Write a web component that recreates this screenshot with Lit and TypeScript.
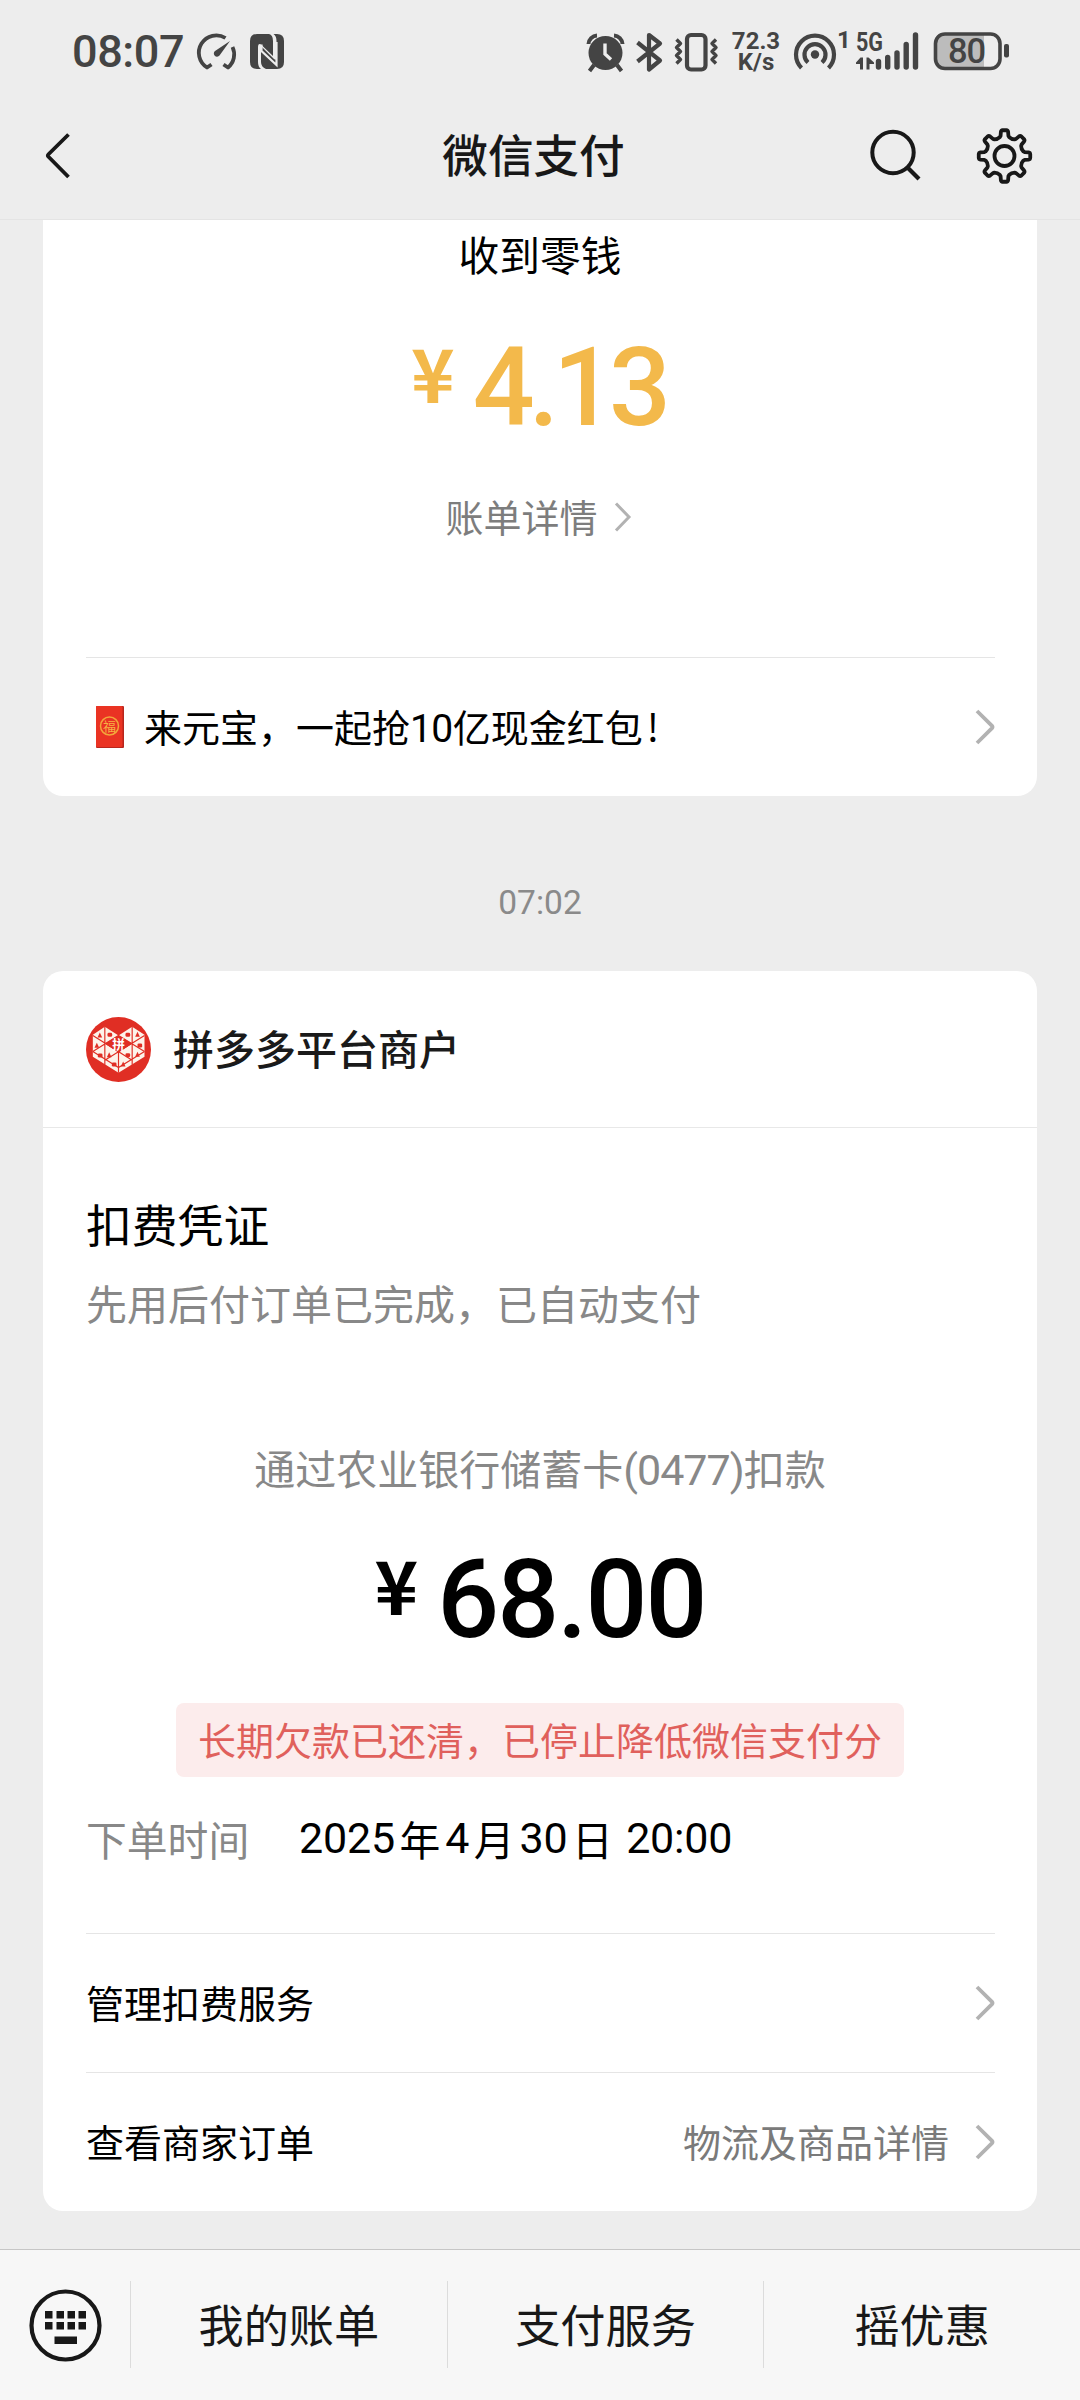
import { LitElement, html, svg, css, type SVGTemplateResult } from "lit";
import { customElement, property } from "lit/decorators.js";

const INK = "#444";

/** Eight-toothed gear outline centred on (cx, cy). */
function gearPath(cx: number, cy: number): string {
  const pt = (r: number, deg: number) => {
    const a = ((deg - 90) * Math.PI) / 180;
    return `${(cx + r * Math.cos(a)).toFixed(2)} ${(cy + r * Math.sin(a)).toFixed(2)}`;
  };
  let d = "";
  for (let i = 0; i < 8; i++) {
    const c = i * 45;
    d += `${i ? "L" : "M"}${pt(19.4, c - 14)}L${pt(20.6, c - 11)}L${pt(24.4, c - 8.5)}Q${pt(25.8, c - 7.5)} ${pt(25.8, c - 4)}`;
    d += `L${pt(25.8, c + 4)}Q${pt(25.8, c + 7.5)} ${pt(24.4, c + 8.5)}L${pt(20.6, c + 11)}L${pt(19.4, c + 14)}Q${pt(18, c + 22.5)} ${pt(19.4, c + 31)}`;
  }
  return d + "Z";
}

function glyph(x: number, y: number, w: number, h: number, body: SVGTemplateResult) {
  return html`<svg width=${w} height=${h} viewBox="${x} ${y} ${w} ${h}">${body}</svg>`;
}

@customElement("chevron-icon")
class ChevronIcon extends LitElement {
  @property({ type: Boolean }) small = false;
  static styles = css`
    :host { display: block; flex: none; }
    svg { display: block; }
  `;
  render() {
    return this.small
      ? html`<svg width="18" height="32" viewBox="0 0 18 32"><path d="M2 2.5 15 16 2 29.5" fill="none" stroke="#b2b2b2" stroke-width="3"/></svg>`
      : html`<svg width="20" height="36" viewBox="0 0 20 36"><path d="M2 2 17 16.8Q18 18 17 19.2L2 34" fill="none" stroke="#b2b2b2" stroke-width="3.8"/></svg>`;
  }
}

@customElement("status-bar")
class StatusBar extends LitElement {
  static styles = css`
    :host { display: flex; justify-content: space-between; height: 92px; box-sizing: border-box; padding: 30px 68px 0 72px; }
    .group { display: flex; height: 44px; }
    .time { width: 122px; font: 500 45px/44px Roboto, sans-serif; color: #444; letter-spacing: -0.4px; }
    .speed { display: flex; flex-direction: column; width: 64px; padding-top: 1px; box-sizing: border-box; text-align: center; font: 700 24px/20.5px Roboto, sans-serif; color: #444; }
    svg { display: block; overflow: visible; }
    text { font-family: Roboto, "Liberation Sans", sans-serif; font-weight: 700; }
  `;
  render() {
    return html`
      <div class="group">
        <div class="time">08:07</div>
        ${glyph(194, 30, 50, 44, svg`
          <g fill="none" stroke="${INK}" stroke-width="3.8">
            <path d="M225.5 38A17 17 0 0 0 207 67.5L211.5 64.5M232.5 47A17 17 0 0 1 228 67.5L223.5 64.5" stroke-linejoin="round"/>
          </g>
          <path d="M230 41 219.5 55.5A3.2 3.2 0 1 1 215 51Z" fill="${INK}"/>`)}
        ${glyph(244, 30, 46, 44, svg`
          <path d="M257 34H269Q273 35 273 41V56L262 45.500Q258 42 258 47V62Q258 67 261 69H257Q250 69 250 62V41Q250 34 257 34Z" fill="${INK}"/>
          <path d="M273.500 34H277Q284 34 284 41V62Q284 69 277 69H266Q261 67 261 62V46L274 59Q276.500 61 276.500 57V41Q276.500 36 273.500 34Z" fill="${INK}"/>
          <path d="M261.500 44.500V51L276.500 65V42" fill="none" stroke="#ededed" stroke-width="2.200"/>`)}
      </div>
      <div class="group">
        ${glyph(584, 30, 46, 44, svg`
          <circle cx="605.500" cy="53" r="17" fill="${INK}"/>
          <path d="M588.500 44A9 9 0 0 1 597 35.500M622.500 44A9 9 0 0 0 614 35.500" stroke="${INK}" stroke-width="4" fill="none"/>
          <path d="M594 65 589.500 71M617 65 621.500 71" stroke="${INK}" stroke-width="4"/>
          <path d="M605 43.500V54L611 59.500" stroke="#ededed" stroke-width="3.400" fill="none"/>`)}
        ${glyph(630, 30, 38, 44, svg`
          <path d="M637.500 42.500 660 60.500 649 69.500V35L660 43.500 637.500 61.500" fill="none" stroke="${INK}" stroke-width="4.200" stroke-linejoin="round"/>`)}
        ${glyph(668, 30, 56, 44, svg`
          <rect x="687" y="35" width="18.500" height="34.500" rx="4" fill="none" stroke="${INK}" stroke-width="4.200"/>
          <path d="M676.500 39.500 680.500 43.500 676.500 47.500 680.500 51.500 676.500 55.500 680.500 59.500 676.500 63.500M716 39.500 712 43.500 716 47.500 712 51.500 716 55.500 712 59.500 716 63.500" fill="none" stroke="${INK}" stroke-width="3.400" stroke-linejoin="round"/>`)}
        <div class="speed"><span>72.3</span><span>K/s</span></div>
        ${glyph(788, 30, 64, 44, svg`
          <g fill="none" stroke="${INK}" stroke-width="4.200">
            <path d="M801.500 68A19 19 0 1 1 828.500 68"/>
            <path d="M808 62.500A10.500 10.500 0 1 1 822 62.500"/>
          </g>
          <circle cx="815" cy="54.500" r="4.200" fill="${INK}"/>
          <text x="837" y="48" font-size="24" fill="${INK}">1</text>`)}
        ${glyph(852, 30, 76, 44, svg`
          <text x="856" y="50.500" font-size="25" textLength="27" lengthAdjust="spacingAndGlyphs" fill="${INK}">5G</text>
          <path d="M856 64V62.500L860.500 57.500H863V69.500H860V64ZM866.500 57.500H868.500L874 62.500V64H869.500V69.500H866.500Z" fill="${INK}"/>
          <g stroke="${INK}" stroke-width="5.400" stroke-linecap="round">
            <path d="M878.500 61.500V67M887.700 57.500V67M897 53V67M906.200 44.500V67M915.500 35V67"/>
          </g>`)}
        ${glyph(928, 30, 84, 44, svg`
          <path d="M944 33H984V70H944Q935 70 935 61V42Q935 33 944 33Z" fill="#bcbcbc"/>
          <rect x="935.500" y="34" width="64.500" height="34.500" rx="9.500" fill="none" stroke="${INK}" stroke-width="3.600"/>
          <rect x="1004" y="44" width="5" height="13.500" rx="2" fill="${INK}"/>
          <text x="948" y="63" font-size="34.500" textLength="38" style="font-weight:500" fill="${INK}">80</text>`)}
      </div>`;
  }
}

@customElement("nav-bar")
class NavBar extends LitElement {
  static styles = css`
    :host { display: grid; grid-template-columns: 1fr auto 1fr; align-items: center; height: 128px; box-sizing: border-box; border-bottom: 1px solid #e4e4e4; }
    .title { font-size: 45.6px; font-weight: 500; line-height: 60px; color: #181818; padding: 0 13px 6px 0; }
    .back { padding-left: 44px; }
    .actions { display: flex; align-items: center; justify-content: flex-end; gap: 51px; padding-right: 46px; }
    svg { display: block; }
  `;
  render() {
    return html`
      <div class="back">${glyph(44, 129, 28, 54, svg`
        <path d="M68.500 134.500 48.500 154.200Q47.300 155.500 48.500 156.800L68.500 177" fill="none" stroke="#181818" stroke-width="3.800"/>`)}</div>
      <div class="title">微信支付</div>
      <div class="actions">
        ${glyph(869, 127, 54, 57, svg`
          <circle cx="893" cy="152.500" r="20.700" fill="none" stroke="#181818" stroke-width="4"/>
          <path d="M907.500 167.500 919 179" stroke="#181818" stroke-width="4.200"/>`)}
        ${glyph(974, 125.5, 60, 60, svg`
          <path d="${gearPath(1004.5, 155.5)}" fill="none" stroke="#181818" stroke-width="3.800" stroke-linejoin="round"/>
          <circle cx="1004.500" cy="155.500" r="10" fill="none" stroke="#181818" stroke-width="3.800"/>`)}
      </div>`;
  }
}

const cardStyles = css`
  :host { display: block; background: #fff; margin: 0 43px; }
  svg { display: block; flex: none; }
  .amount { display: flex; justify-content: center; height: 120px; font-family: Roboto, "Noto Sans CJK SC", sans-serif; font-weight: 500; font-size: 109px; line-height: 120px; }
  .yen { font-family: "Noto Sans CJK SC", sans-serif; font-size: 74px; font-weight: 700; line-height: 86px; }
  .row { display: flex; align-items: center; height: 138px; margin: 0 42px 0 43px; border-top: 1px solid #e5e5e5; font-size: 38px; }
  .label { flex: 1; color: #000; padding-bottom: 4px; }
  .note { color: #7a7a7a; padding-bottom: 4px; margin-right: 26px; }
`;

@customElement("income-card")
class IncomeCard extends LitElement {
  static styles = [cardStyles, css`
    :host { height: 576px; border-radius: 0 0 20px 20px; }
    .title { padding-top: 4px; text-align: center; font-size: 40.7px; line-height: 60px; color: #000; }
    .amount { margin: 44px 4px 0 0; color: #f3b94b; letter-spacing: -6px; }
    .yen { margin-right: 24px; }
    .link { display: flex; justify-content: center; align-items: center; gap: 16px; margin: 43px 3px 115px 0; height: 51px; font-size: 38px; color: #7d7d7d; }
    .link span { line-height: 50px; padding-bottom: 2px; }
    .packet { margin: 0 20px 0 10px; }
    .num { font-family: Roboto, sans-serif; font-size: 39px; letter-spacing: -0.6px; line-height: 0; }
    .bang { margin-left: 4px; }
  `];
  render() {
    return html`
      <div class="title">收到零钱</div>
      <div class="amount"><span class="yen">¥</span><span>4.13</span></div>
      <div class="link"><span>账单详情</span><chevron-icon small></chevron-icon></div>
      <div class="row">
        <svg class="packet" width="28" height="42" viewBox="0 0 28 42">
          <rect width="28" height="42" rx="1" fill="#b8261d"/>
          <rect width="26.500" height="41" rx="1" fill="#ea3323"/>
          <circle cx="13.500" cy="20" r="9" fill="none" stroke="#f3a63a" stroke-width="1.500"/>
          <text x="13.500" y="25" font-size="13" text-anchor="middle" fill="#f6b243">福</text>
        </svg>
        <span class="label">来元宝，一起抢<span class="num">10</span>亿现金红包<span class="bang">!</span></span>
        <chevron-icon></chevron-icon>
      </div>`;
  }
}

const heartIcons = [
  [71, 88], [101, 86], [62, 119], [72, 148], [99, 147], [114, 175],
  [141, 175], [155, 147], [184, 146], [191, 118], [184, 86], [155, 86],
];

@customElement("payment-card")
class PaymentCard extends LitElement {
  static styles = [cardStyles, css`
    :host { height: 1240px; border-radius: 20px; }
    .head { display: flex; align-items: center; gap: 22px; height: 156px; padding-left: 43px; border-bottom: 1px solid #e8e8e8; font-size: 41px; font-weight: 500; color: #1a1a1a; }
    .head span { padding-bottom: 4px; }
    .title { padding: 65px 43px 0; font-size: 45.8px; line-height: 60px; color: #000; }
    .desc { padding: 19px 43px 0; font-size: 41px; line-height: 60px; color: #888; }
    .via { padding-top: 105px; height: 60px; text-align: center; font-size: 41px; line-height: 60px; color: #888; }
    .num { font-family: Roboto, sans-serif; font-size: 43px; line-height: 0; letter-spacing: -0.2px; }
    .via .num { letter-spacing: -1px; }
    .amount { margin-top: 43px; color: #000; letter-spacing: -2px; }
    .yen { margin-right: 21px; }
    .tag { width: fit-content; margin: 43px auto 0; padding: 9px 22px 0; height: 65px; border-radius: 8px; background: #fcecec; color: #e0605c; font-size: 38px; line-height: 54px; }
    .order { display: flex; padding: 32px 43px 63px; height: 61px; font-size: 40.8px; line-height: 60px; color: #000; white-space: pre; }
    .order .num { line-height: 59px; }
    .key { color: #888; width: 213px; }
    .cj { margin: 0 5px 0 4.5px; }
    .clock { margin-left: -2px; }
  `];
  render() {
    return html`
      <div class="head">
        <svg width="65" height="65" viewBox="29.500 32.500 195 195">
          <circle cx="127" cy="130" r="97.500" fill="#e02e24"/>
          <path d="M86 62 127 88 168 62 205 86V152L127 200 50 152V86Z" fill="#fdf3ea"/>
          <path d="M127 88 168 112 127 138 86 112Z" fill="#e02e24"/>
          <path d="M86 62V176M168 62V176M127 138V200M50 88 168 162M50 136 127 184 205 136M50 136 127 88 205 136M205 88 86 162" fill="none" stroke="#e02e24" stroke-width="3.500"/>
          ${heartIcons.map(([x, y], i) => i % 2
            ? svg`<rect x=${x - 7} y=${y - 6} width="14" height="12" rx="4" fill="#e02e24"/>`
            : svg`<path d="M${x - 7} ${y + 6}L${x} ${y - 9}L${x + 7} ${y + 6}Z" fill="#e02e24"/>`)}
          <path d="M127 92 164 114 127 138 90 114Z" fill="#e02e24"/>
          <text x="127" y="128" font-size="38" font-weight="700" text-anchor="middle" fill="#fff">拼</text>
        </svg>
        <span>拼多多平台商户</span>
      </div>
      <div class="title">扣费凭证</div>
      <div class="desc">先用后付订单已完成，已自动支付</div>
      <div class="via">通过农业银行储蓄卡<span class="num">(0477)</span>扣款</div>
      <div class="amount"><span class="yen">¥</span><span>68.00</span></div>
      <div class="tag">长期欠款已还清，已停止降低微信支付分</div>
      <div class="order"><span class="key">下单时间</span><span class="num">2025</span><span class="cj">年</span><span class="num">4</span><span class="cj">月</span><span class="num">30</span><span class="cj">日</span><span class="num clock"> 20:00</span></div>
      <div class="row"><span class="label">管理扣费服务</span><chevron-icon></chevron-icon></div>
      <div class="row"><span class="label">查看商家订单</span><span class="note">物流及商品详情</span><chevron-icon></chevron-icon></div>`;
  }
}

@customElement("menu-bar")
class MenuBar extends LitElement {
  static styles = css`
    :host { display: flex; height: 151px; box-sizing: border-box; border-top: 1px solid #c6c6c6; background: #f7f7f7; }
    .key { width: 130px; padding: 37px 0 0 27px; box-sizing: border-box; }
    .item { flex: 1; height: 87px; margin-top: 31px; border-left: 1px solid #dcdcdc; text-align: center; font-size: 45.200px; line-height: 85px; color: #181818; }
    svg { display: block; }
  `;
  render() {
    return html`
      <div class="key">${glyph(27, 2287, 77, 77, svg`
        <circle cx="65.500" cy="2325.500" r="34" fill="none" stroke="#181818" stroke-width="4.200"/>
        ${[45, 56.5, 67.5, 78.5].map((x) => svg`
          <rect x=${x} y="2311" width="7.500" height="7.500" fill="#181818"/>
          <rect x=${x} y="2322" width="7.500" height="7.500" fill="#181818"/>`)}
        <rect x="54.500" y="2336.500" width="22.500" height="7.500" fill="#181818"/>`)}</div>
      ${["我的账单", "支付服务", "摇优惠"].map((t) => html`<div class="item">${t}</div>`)}`;
  }
}

@customElement("app-root")
class AppRoot extends LitElement {
  static styles = css`
    :host { display: flex; flex-direction: column; width: 1080px; height: 2400px; overflow: hidden; background: #ededed; font-family: "Noto Sans CJK SC", sans-serif; }
    .time { height: 175px; text-align: center; font: 400 33.500px/213px Roboto, sans-serif; color: #8a8a8a; }
    menu-bar { margin-top: 38px; }
  `;
  render() {
    return html`
      <status-bar></status-bar>
      <nav-bar></nav-bar>
      <income-card></income-card>
      <div class="time">07:02</div>
      <payment-card></payment-card>
      <menu-bar></menu-bar>`;
  }
}
